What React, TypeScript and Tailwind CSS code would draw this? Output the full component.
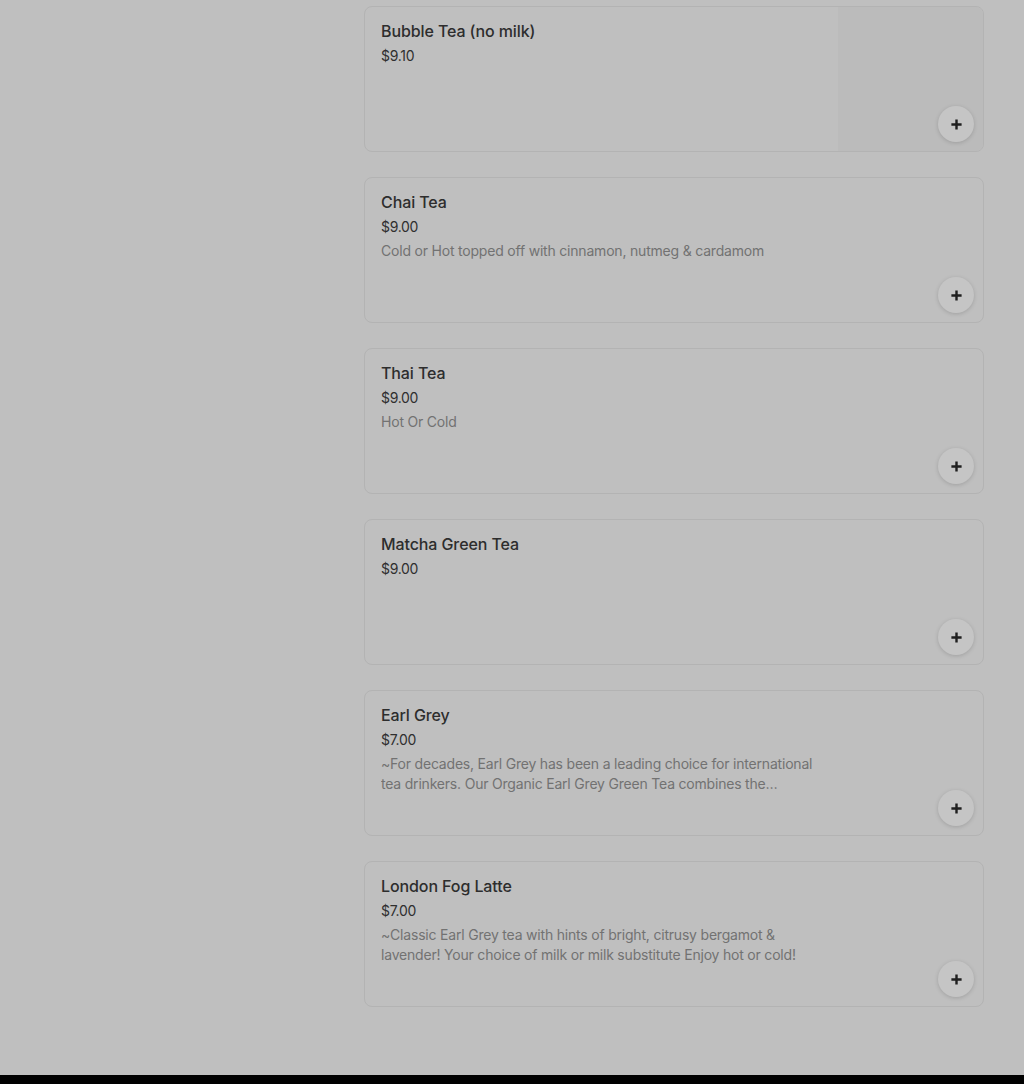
import React from "react";

type Item = {
  name: string;
  price: string;
  description?: string;
  image?: boolean;
};

const items: Item[] = [
  { name: "Bubble Tea (no milk)", price: "$9.10", image: true },
  {
    name: "Chai Tea",
    price: "$9.00",
    description: "Cold or Hot topped off with cinnamon, nutmeg & cardamom",
  },
  { name: "Thai Tea", price: "$9.00", description: "Hot Or Cold" },
  { name: "Matcha Green Tea", price: "$9.00" },
  {
    name: "Earl Grey",
    price: "$7.00",
    description:
      "~For decades, Earl Grey has been a leading choice for international tea drinkers. Our Organic Earl Grey Green Tea combines the delicate taste of green tea with the citrus aroma of bergamot.",
  },
  {
    name: "London Fog Latte",
    price: "$7.00",
    description:
      "~Classic Earl Grey tea with hints of bright, citrusy bergamot & lavender! Your choice of milk or milk substitute Enjoy hot or cold!",
  },
];

const PlusIcon = () => (
  <svg width="13" height="13" viewBox="0 0 14 14" fill="none">
    <path d="M7 1.5v11M1.5 7h11" stroke="#1f1f1f" strokeWidth="2.6" />
  </svg>
);

// One menu card
const MenuCard = ({ item }: { item: Item }) => {
  return (
    <div className="relative flex h-[146px] overflow-hidden rounded-lg border border-[#b3b3b3]">
      <div className="flex-1 pl-4 pt-[13px]">
        <div className="text-[16px] font-medium leading-[22px] tracking-[-0.1px] text-[#2d2d2d]">
          {item.name}
        </div>
        <div className="mt-[4px] text-[14px] leading-[20px] tracking-[-0.3px] text-[#2f2f2f]">
          {item.price}
        </div>
        {item.description && (
          <p className="mt-[4px] line-clamp-2 max-w-[436px] text-[14px] leading-[20px] tracking-[-0.2px] text-[#727272]">
            {item.description}
          </p>
        )}
      </div>
      {item.image && <div className="w-[145px] bg-[#bbbbbb]" />}
      <button className="absolute bottom-[9px] right-[9px] flex h-9 w-9 items-center justify-center rounded-full bg-[#c5c5c5] shadow-[0_1px_4px_rgba(0,0,0,0.16)]">
        <PlusIcon />
      </button>
    </div>
  );
};

const App = () => {
  return (
    <div
      className="min-h-screen bg-[#bfbfbf]"
      style={{ fontFamily: "Inter, 'Noto Sans', Arial, sans-serif" }}
    >
      <div className="flex pt-[6px] pb-[68px]">
        <aside className="w-[364px] shrink-0" />
        <main className="flex w-[620px] flex-col gap-[25px]">
          {items.map((item) => (
            <MenuCard key={item.name} item={item} />
          ))}
        </main>
      </div>
      <footer className="h-[200px] bg-black" />
    </div>
  );
};

export default App;
